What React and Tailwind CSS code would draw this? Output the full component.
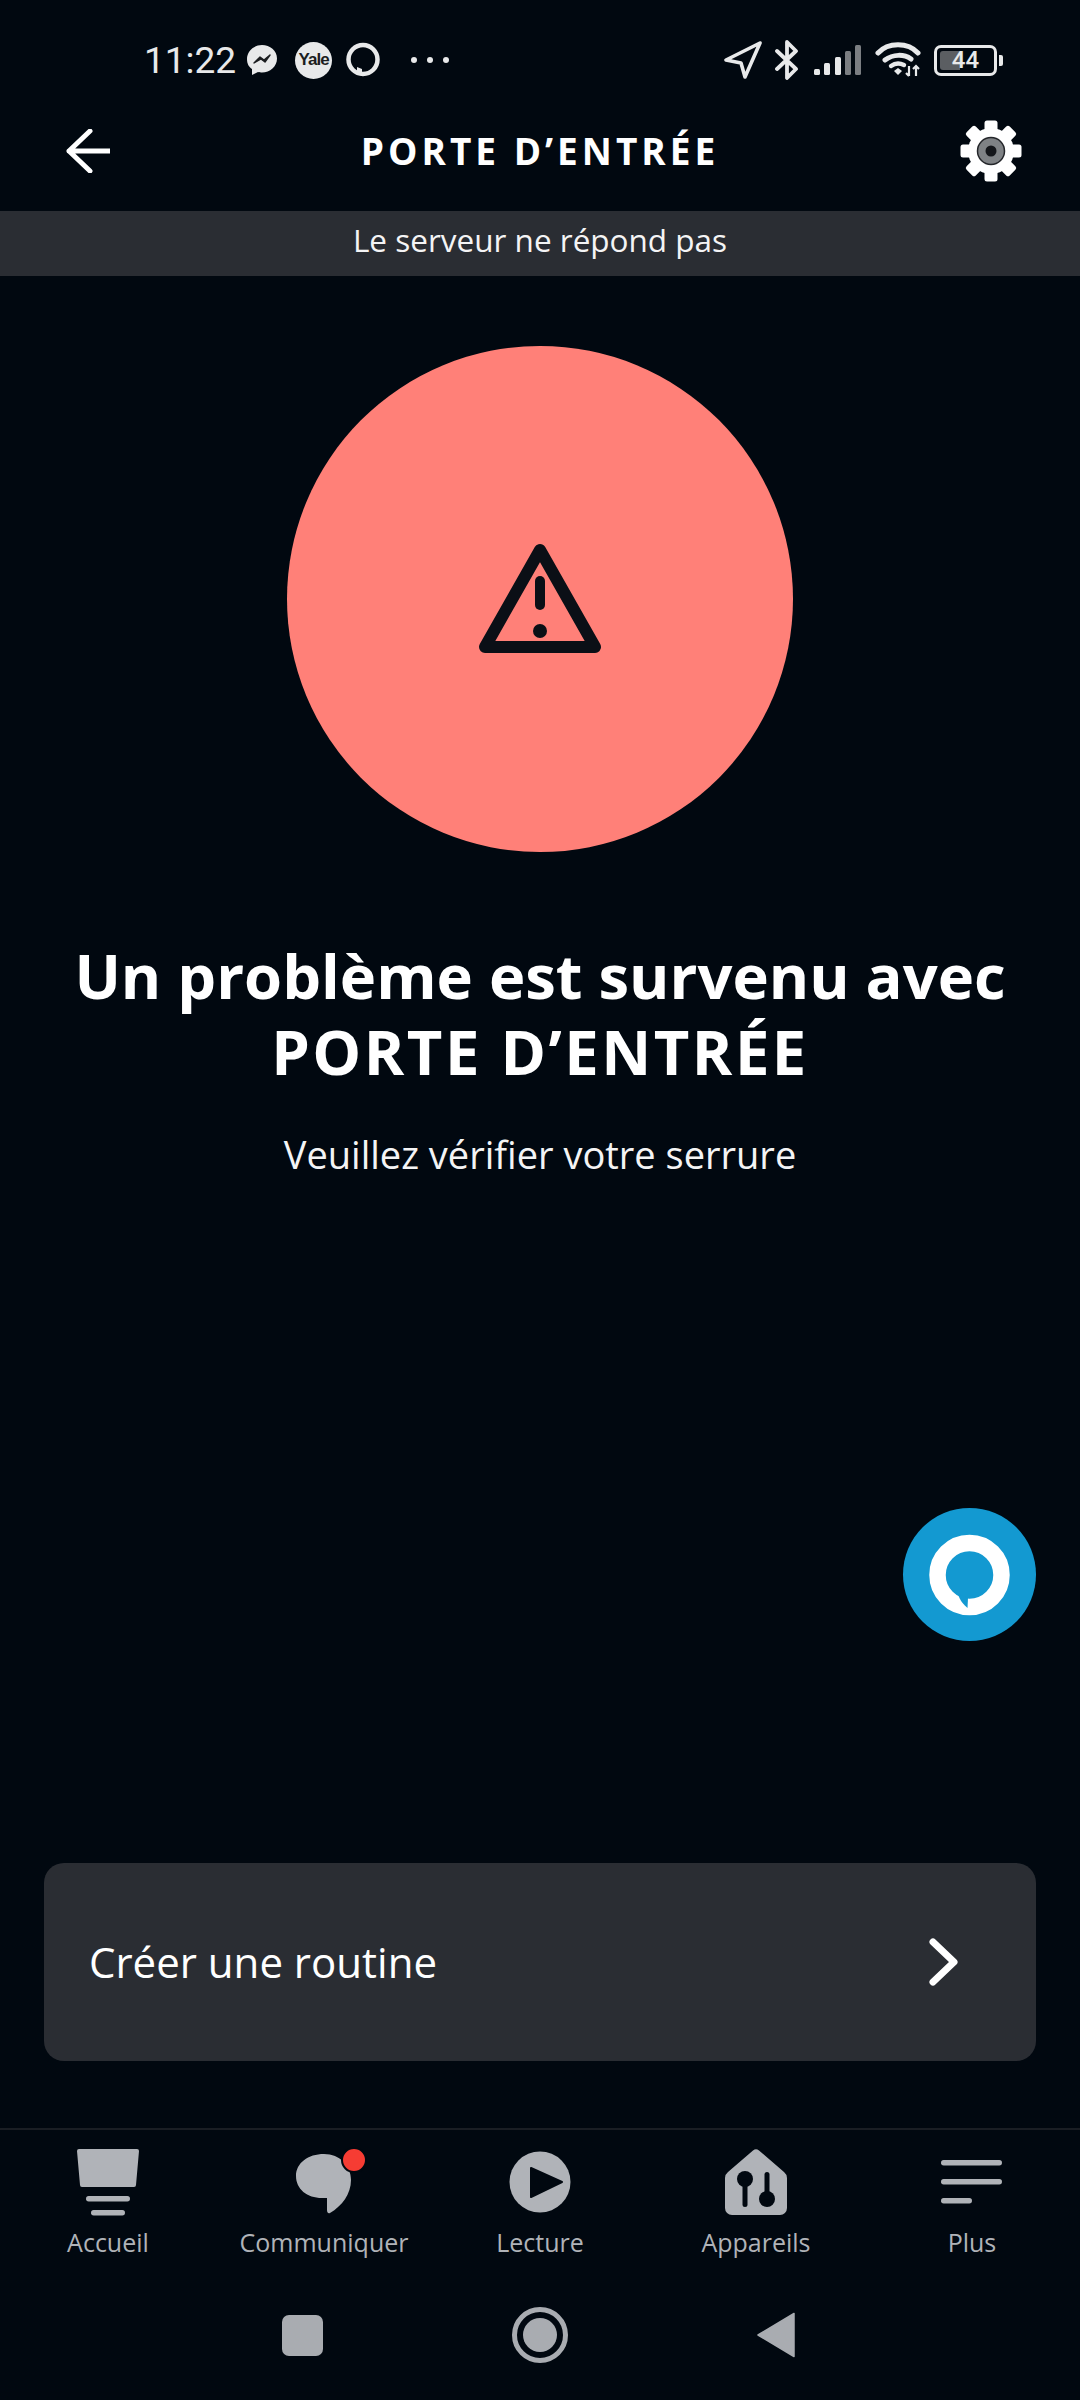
import React from "react";

const BG = "#010810";

/* ── Status bar icons ── */
function MessengerIcon() {
  return (
    <svg width="30" height="32" viewBox="0 0 30 32" className="ml-[11px]">
      <path d="M15 1C7 1 0 7 0 15c0 5 2 8 5 10v6l6-3c1 .3 3 .4 4 .4 8 0 15-6 15-14S23 1 15 1z" fill="#e8e9ea" />
      <path d="M7 19l6-6 4 3 6-5-5 7-4-3z" fill="#1b1d20" stroke="#1b1d20" strokeWidth="1.4" strokeLinejoin="round" />
    </svg>
  );
}

function AlexaRing() {
  return (
    <svg width="34" height="36" viewBox="0 0 34 36" className="ml-[14px]">
      <circle cx="17" cy="17.500" r="14.500" fill="none" stroke="#e8e9ea" strokeWidth="4.500" />
      <path d="M11 25l5 2v7l-5-3z" fill="#e8e9ea" />
    </svg>
  );
}

function StatusRight() {
  return (
    <div className="flex items-center text-[#e8e9ea]">
      <svg width="38" height="38" viewBox="0 0 38 38">
        <path d="M36 2L2 19l15 3 4 14z" fill="none" stroke="currentColor" strokeWidth="3.6" strokeLinejoin="round" />
      </svg>
      <svg width="24" height="40" viewBox="0 0 24 40" className="ml-[13px]">
        <path d="M2 11l19 18-9 9V2l9 9L2 29" fill="none" stroke="currentColor" strokeWidth="3.8" strokeLinejoin="round" strokeLinecap="round" />
      </svg>
      <svg width="48" height="32" viewBox="0 0 48 32" className="ml-[15px]">
        <rect x="0" y="25" width="6" height="6" rx="1.5" fill="#e8e9ea" />
        <rect x="10" y="19" width="6" height="12" rx="1.5" fill="#e8e9ea" />
        <rect x="21" y="13" width="6" height="18" rx="1.5" fill="#e8e9ea" />
        <rect x="31" y="7" width="6" height="24" rx="1.5" fill="#7b7e82" />
        <rect x="41" y="1" width="6" height="30" rx="1.5" fill="#7b7e82" />
      </svg>
      <svg width="46" height="36" viewBox="0 0 46 36" className="ml-[13px]">
        <path d="M3 11C13 0 33 0 43 11" fill="none" stroke="currentColor" strokeWidth="5" strokeLinecap="round" />
        <path d="M10 18c8-6 19-6 26-1" fill="none" stroke="currentColor" strokeWidth="5" strokeLinecap="round" />
        <path d="M16 24c4-3 9-3 13-1" fill="none" stroke="currentColor" strokeWidth="4.400" strokeLinecap="round" />
        <path d="M19 29l4-3 4 3-4 4z" fill="currentColor" />
        <path d="M34 24v10M31 31l3 3M41 34V24M38 27l3-3 3 3" fill="none" stroke="currentColor" strokeWidth="2.2" />
      </svg>
      <div className="ml-[13px] flex items-center">
        <div className="relative flex h-[31px] w-[63px] items-center rounded-[7px] border-[3px] border-[#e8e9ea] p-[3px]">
          <div className="h-full w-[20px] rounded-l-[3px] bg-[#5b5e62]" />
          <span className="absolute inset-0 flex items-center justify-center font-['Roboto',sans-serif] text-[24px] leading-none font-medium">44</span>
        </div>
        <div className="ml-[2px] h-[11px] w-[4px] rounded-r-[2px] bg-[#e8e9ea]" />
      </div>
    </div>
  );
}

function GearIcon() {
  const angles = [0, 45, 90, 135, 180, 225, 270, 315];
  return (
    <svg width="62" height="62" viewBox="0 0 62 62">
      {angles.map((a) => (
        <rect key={a} x="24.5" y="0.5" width="13" height="12" rx="2.5" fill="#fff" transform={`rotate(${a} 31 31)`} />
      ))}
      <circle cx="31" cy="31" r="23" fill="#fff" />
      <circle cx="31" cy="31" r="13.5" fill="#7f8285" stroke="#24262a" strokeWidth="1.5" />
      <circle cx="31" cy="31" r="5.5" fill="#14161a" />
    </svg>
  );
}

/* ── Tab icons, all on a 72x68 box ── */
function HomeTab() {
  return (
    <>
      <path d="M7 1h58a2 2 0 012 2l-3 34a2 2 0 01-2 2H10a2 2 0 01-2-2L5 3a2 2 0 012-2z" />
      <rect x="14" y="48" width="44" height="5.5" rx="2.7" />
      <rect x="19" y="62" width="34" height="5.5" rx="2.7" />
    </>
  );
}

function ChatTab() {
  return (
    <>
      <path d="M36 6c16 0 27 12 27 26 0 14-9 26-21 33-2 1-3-1-3-3V50h-5C19 50 8 41 8 28 8 15 20 6 36 6z" />
      <circle cx="66" cy="12" r="12" fill="#f63c33" stroke={BG} strokeWidth="2" />
    </>
  );
}

function PlayTab() {
  return (
    <>
      <circle cx="36" cy="34" r="30.5" />
      <path d="M27 20l31 14-31 15z" fill={BG} stroke={BG} strokeWidth="2" strokeLinejoin="round" />
    </>
  );
}

function DevicesTab() {
  return (
    <>
      <path d="M33 2.500a4.500 4.500 0 016 0L64 24a8 8 0 013 6v30a7 7 0 01-7 7H12a7 7 0 01-7-7V30a8 8 0 013-6z" />
      <circle cx="25" cy="31" r="8" fill={BG} />
      <rect x="22.500" y="31" width="5" height="28" rx="2.500" fill={BG} />
      <circle cx="47" cy="51" r="8" fill={BG} />
      <rect x="44.500" y="24" width="5" height="28" rx="2.500" fill={BG} />
    </>
  );
}

function MoreTab() {
  return (
    <>
      <rect x="5" y="12" width="61" height="5.500" rx="2.700" />
      <rect x="5" y="31" width="61" height="5.500" rx="2.700" />
      <rect x="5" y="50" width="31" height="5.500" rx="2.700" />
    </>
  );
}

const TABS = [
  { label: "Accueil", icon: <HomeTab /> },
  { label: "Communiquer", icon: <ChatTab /> },
  { label: "Lecture", icon: <PlayTab /> },
  { label: "Appareils", icon: <DevicesTab /> },
  { label: "Plus", icon: <MoreTab /> },
];

export default function App() {
  return (
    <div className="relative flex h-[2400px] w-[1080px] flex-col overflow-hidden bg-[#010810] font-['Open_Sans',sans-serif] text-white">

      {/* ── Status bar ── */}
      <div className="flex h-[104px] shrink-0 items-center justify-between pt-[16px] pr-[77px] pl-[144px]">
        <div className="flex items-center text-[#e8e9ea]">
          <span className="font-['Roboto',sans-serif] text-[37px] leading-none">11:22</span>
          <MessengerIcon />
          <div className="ml-[18px] flex h-[37px] w-[37px] items-center justify-center rounded-full bg-[#e8e9ea] font-['Liberation_Sans',sans-serif] text-[17px] font-bold tracking-[-1px] text-[#1b1d20]">
            Yale
          </div>
          <AlexaRing />
          <div className="ml-[31px] flex gap-[10px]">
            <div className="h-[6px] w-[6px] rounded-full bg-[#e8e9ea]" />
            <div className="h-[6px] w-[6px] rounded-full bg-[#e8e9ea]" />
            <div className="h-[6px] w-[6px] rounded-full bg-[#e8e9ea]" />
          </div>
        </div>
        <StatusRight />
      </div>

      {/* ── Title bar ── */}
      <div className="flex h-[107px] shrink-0 items-center justify-between pr-[58px] pb-[14px] pl-[66px]">
        <div className="w-[54px]">
          <svg width="44" height="44" viewBox="0 0 44 44">
            <path d="M24 2L3 22l21 20M3 22h41" fill="none" stroke="#fff" strokeWidth="5" strokeLinecap="round" strokeLinejoin="round" />
          </svg>
        </div>
        <div className="text-[37px] leading-none font-bold tracking-[4px]">PORTE D’ENTRÉE</div>
        <GearIcon />
      </div>

      {/* ── Offline banner ── */}
      <div className="flex h-[65px] shrink-0 items-center justify-center bg-[#2a2d33] pb-[7px] text-[31.500px] leading-none text-[#f4f4f5]">
        Le serveur ne répond pas
      </div>

      {/* ── Main ── */}
      <main className="flex flex-1 flex-col items-center">
        <div className="mt-[70px] flex h-[506px] w-[506px] items-center justify-center rounded-full bg-[#ff8078]">
          <svg width="124" height="112" viewBox="0 0 124 112" className="text-[#0b0f16]">
            <path d="M62 7L117 104H7z" fill="none" stroke="currentColor" strokeWidth="12" strokeLinejoin="round" />
            <path d="M62 38v24" stroke="currentColor" strokeWidth="10" strokeLinecap="round" />
            <circle cx="62" cy="88" r="7" fill="currentColor" />
          </svg>
        </div>
        <h1 className="mt-[85px] text-center text-[61.500px] leading-[76px] font-bold">
          Un problème est survenu avec
          <br />
          <span className="tracking-[2.500px]">PORTE D’ENTRÉE</span>
        </h1>
        <p className="mt-[40px] text-[38px] leading-[50px] text-[#f4f4f5]">Veuillez vérifier votre serrure</p>

        <div className="mt-auto mb-[67px] flex h-[198px] w-[992px] items-center justify-between rounded-[20px] bg-[#2a2d33] pr-[76px] pl-[45px]">
          <span className="text-[42px] leading-none">Créer une routine</span>
          <svg width="32" height="50" viewBox="0 0 32 50">
            <path d="M5 5l21 20L5 45" fill="none" stroke="#fff" strokeWidth="7" strokeLinecap="round" strokeLinejoin="round" />
          </svg>
        </div>
      </main>

      {/* ── Alexa button ── */}
      <div className="absolute top-[1508px] left-[903px] flex h-[133px] w-[133px] items-center justify-center rounded-full bg-[#1399d1]">
        <svg width="84" height="84" viewBox="0 0 84 84">
          <circle cx="41.500" cy="42" r="32" fill="none" stroke="#fff" strokeWidth="16.500" />
          <path d="M30 61l10 4-.5 10C36 72 32 68 30 61z" fill="#1399d1" />
        </svg>
      </div>

      {/* ── Tab bar ── */}
      <nav className="grid h-[146px] shrink-0 grid-cols-5 border-t-2 border-[#1a1e24] pt-[18px]">
        {TABS.map((t) => (
          <div key={t.label} className="flex flex-col items-center text-[#b0b3b8]">
            <svg width="72" height="68" viewBox="0 0 72 68" fill="currentColor" className="overflow-visible">
              {t.icon}
            </svg>
            <span className="mt-[11px] text-[25px] leading-[30px]">{t.label}</span>
          </div>
        ))}
      </nav>

      {/* ── Android nav ── */}
      <div className="flex h-[126px] shrink-0 items-center pb-[4px] pl-[282px]">
        <div className="h-[41px] w-[41px] rounded-[7px] bg-[#a9acb1]" />
        <div className="ml-[189px] flex h-[56px] w-[56px] items-center justify-center rounded-full border-[5px] border-[#a9acb1]">
          <div className="h-[34px] w-[34px] rounded-full bg-[#a9acb1]" />
        </div>
        <svg width="38" height="46" viewBox="0 0 38 46" className="ml-[189px]">
          <path d="M37 1.500v43L1 23z" fill="#a9acb1" stroke="#a9acb1" strokeWidth="1.500" strokeLinejoin="round" />
        </svg>
      </div>
    </div>
  );
}
